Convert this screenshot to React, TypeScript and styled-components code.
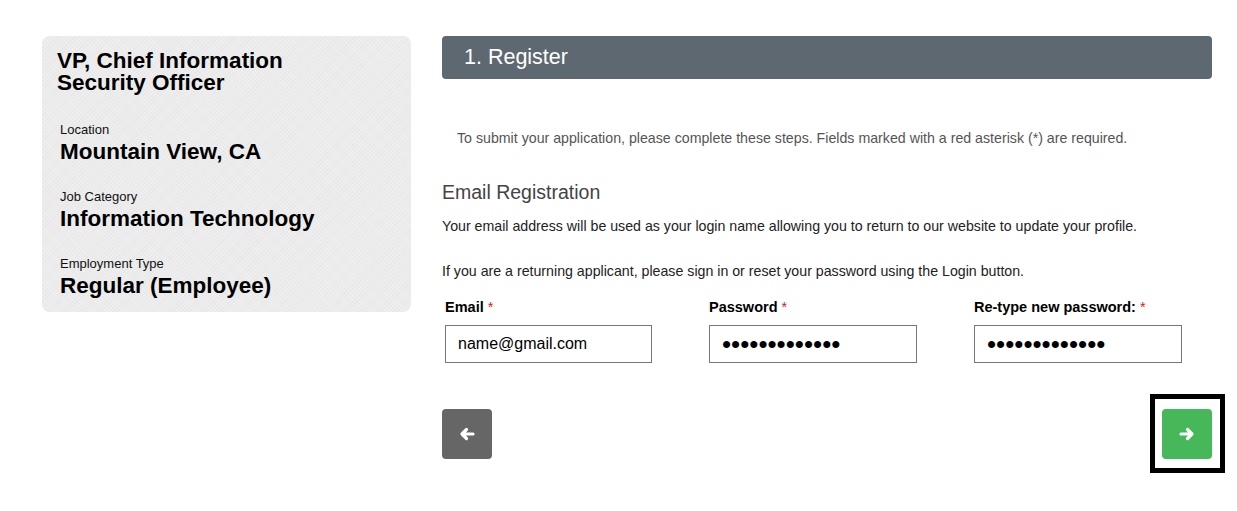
import React from 'react';
import styled, { createGlobalStyle } from 'styled-components';

const GlobalStyle = createGlobalStyle`
  html, body {
    margin: 0;
    padding: 0;
    background: #ffffff;
    font-family: "Liberation Sans", Arial, sans-serif;
    color: #222;
  }
`;

const Page = styled.div`
  display: flex;
  align-items: flex-start;
  gap: 31px;
  padding: 36px 25px 0 42px;
  width: 1237px;
  box-sizing: border-box;
`;

const JobCard = styled.aside`
  width: 369px;
  height: 276px;
  box-sizing: border-box;
  padding: 14px 15px 0 15px;
  border-radius: 8px;
  background-color: #ececec;
  background-image:
    repeating-linear-gradient(45deg, rgba(255, 255, 255, 0.18) 0 1px, transparent 1px 3px),
    repeating-linear-gradient(-45deg, rgba(0, 0, 0, 0.018) 0 1px, transparent 1px 3px);
`;

const JobTitle = styled.h1`
  margin: 0 0 28px 0;
  font-size: 22.5px;
  line-height: 22px;
  font-weight: bold;
  color: #000;
`;

const Detail = styled.div`
  padding-left: 3px;
  margin-bottom: 23px;
`;

const DetailLabel = styled.div`
  font-size: 13px;
  line-height: 16px;
  color: #111;
`;

const DetailValue = styled.div`
  font-size: 22.5px;
  line-height: 28px;
  font-weight: bold;
  color: #000;
`;

const Main = styled.main`
  flex: 1;
  display: flex;
  flex-direction: column;
`;

const StepHeader = styled.div`
  height: 43px;
  border-radius: 4px;
  background: #5e6870;
  color: #fff;
  display: flex;
  align-items: center;
  padding-left: 22px;
  font-size: 21.5px;
`;

const Intro = styled.p`
  margin: 50px 0 0 15px;
  font-size: 14.2px;
  line-height: 18px;
  color: #555;
`;

const SectionTitle = styled.h2`
  margin: 33px 0 0 0;
  font-size: 19.5px;
  line-height: 24px;
  font-weight: normal;
  color: #444;
`;

const Paragraph = styled.p<{ $top: number }>`
  margin: ${(p) => p.$top}px 0 0 0;
  font-size: 14.2px;
  line-height: 18px;
  color: #222;
`;

const Fields = styled.div`
  display: grid;
  grid-template-columns: 207px 208px 208px;
  column-gap: 57px;
  padding-left: 3px;
  margin-top: 19px;
`;

const Field = styled.label`
  display: flex;
  flex-direction: column;
  gap: 10px;
`;

const FieldLabel = styled.span`
  font-size: 14.5px;
  line-height: 16px;
  font-weight: bold;
  color: #000;
`;

const Required = styled.span`
  color: #e02020;
  font-weight: normal;
  margin-left: 4px;
`;

const TextInput = styled.input<{ $masked?: boolean }>`
  width: 100%;
  height: 38px;
  box-sizing: border-box;
  border: 1px solid #767676;
  border-radius: 0;
  padding: 0 12px;
  font-family: "Liberation Sans", Arial, sans-serif;
  font-size: ${(p) => (p.$masked ? '26px' : '16px')};
  color: #000;
  background: #fff;
  outline: none;
`;

const Nav = styled.div`
  display: flex;
  justify-content: space-between;
  align-items: center;
  margin-top: 31px;
`;

const NavButton = styled.button<{ $color: string }>`
  width: 50px;
  height: 50px;
  border: none;
  border-radius: 4px;
  background: ${(p) => p.$color};
  display: flex;
  align-items: center;
  justify-content: center;
  padding: 0;
  cursor: pointer;
`;

// black frame drawn round the next button in the screenshot
const Highlight = styled.div`
  border: 5px solid #000;
  padding: 10px 8px 9px 7px;
  margin-right: -13px;
`;

const Arrow = ({ dir }: { dir: 'left' | 'right' }) => (
  <svg width="16" height="16" viewBox="0 0 16 16" style={{ transform: dir === 'left' ? 'scaleX(-1)' : undefined }}>
    <path
      d="M2 8 H12.5 M8.5 3.5 L13 8 L8.5 12.5"
      fill="none"
      stroke="#fff"
      strokeWidth="3.2"
      strokeLinecap="round"
      strokeLinejoin="round"
    />
  </svg>
);

const details = [
  { label: 'Location', value: 'Mountain View, CA' },
  { label: 'Job Category', value: 'Information Technology' },
  { label: 'Employment Type', value: 'Regular (Employee)' },
];

export default function App() {
  return (
    <>
      <GlobalStyle />
      <Page>
        <JobCard>
          <JobTitle>
            VP, Chief Information
            <br />
            Security Officer
          </JobTitle>
          {details.map((d) => (
            <Detail key={d.label}>
              <DetailLabel>{d.label}</DetailLabel>
              <DetailValue>{d.value}</DetailValue>
            </Detail>
          ))}
        </JobCard>
        <Main>
          <StepHeader>1. Register</StepHeader>
          <Intro>
            To submit your application, please complete these steps. Fields marked with a red asterisk (*) are required.
          </Intro>
          <SectionTitle>Email Registration</SectionTitle>
          <Paragraph $top={13}>
            Your email address will be used as your login name allowing you to return to our website to update your profile.
          </Paragraph>
          <Paragraph $top={27}>
            If you are a returning applicant, please sign in or reset your password using the Login button.
          </Paragraph>
          <Fields>
            <Field>
              <FieldLabel>
                Email<Required>*</Required>
              </FieldLabel>
              <TextInput type="text" defaultValue="name@gmail.com" />
            </Field>
            <Field>
              <FieldLabel>
                Password<Required>*</Required>
              </FieldLabel>
              <TextInput $masked type="password" defaultValue="passwordpass1" />
            </Field>
            <Field>
              <FieldLabel>
                Re-type new password:<Required>*</Required>
              </FieldLabel>
              <TextInput $masked type="password" defaultValue="passwordpass1" />
            </Field>
          </Fields>
          <Nav>
            <NavButton $color="#666666" aria-label="Previous">
              <Arrow dir="left" />
            </NavButton>
            <Highlight>
              <NavButton $color="#46b85a" aria-label="Next">
                <Arrow dir="right" />
              </NavButton>
            </Highlight>
          </Nav>
        </Main>
      </Page>
    </>
  );
}
